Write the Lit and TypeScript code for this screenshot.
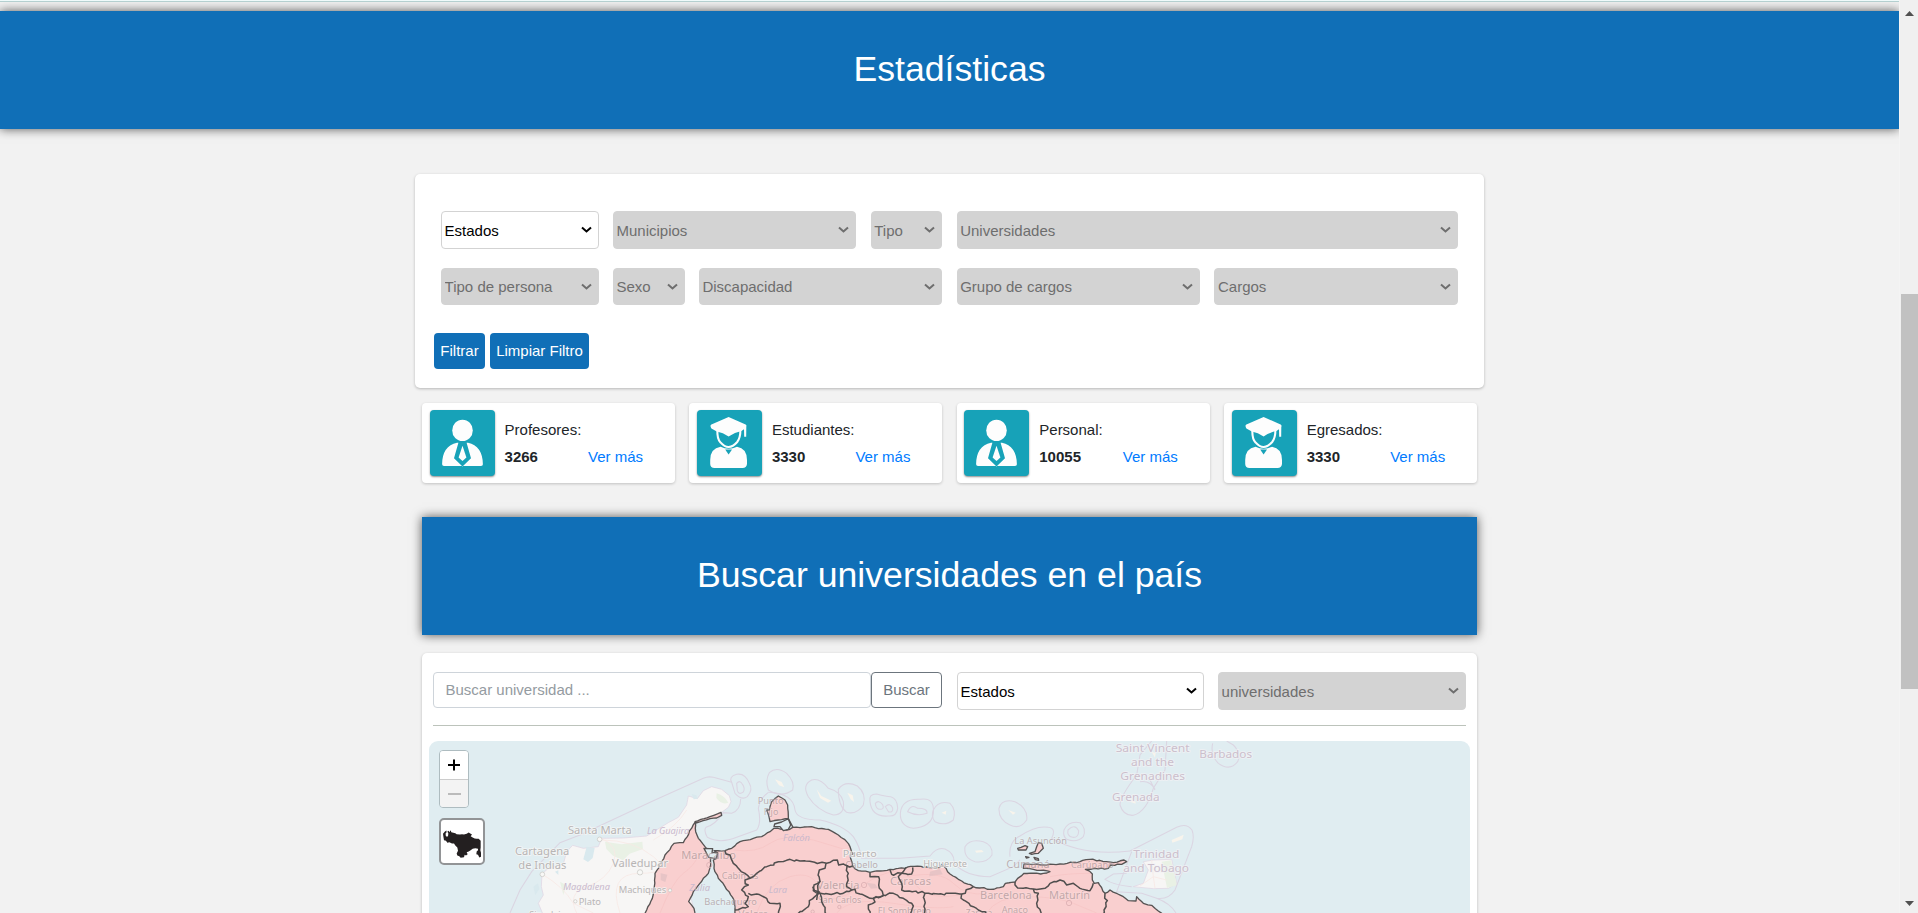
import { LitElement, html, svg, css } from "lit";
import { customElement, property } from "lit/decorators.js";

type Pt = [number, number];

/** Reads "x,y x,y ..." and shifts it by dx. */
const pts = (s: string, dx = 0): Pt[] =>
  s.trim().split(/\s+/).map((p) => {
    const [x, y] = p.split(",").map(Number);
    return [x + dx, y] as Pt;
  });

/** Roughens a polyline so that it looks like a surveyed border. */
const jag = (list: Pt[], amount = 3.2): string => {
  let seed = 7;
  const rnd = () => {
    seed = (seed * 16807) % 2147483647;
    return seed / 2147483647 - 0.5;
  };
  const out: string[] = [];
  list.forEach(([x, y], i) => {
    out.push(`${x},${y}`);
    const next = list[i + 1];
    if (!next) return;
    const len = Math.hypot(next[0] - x, next[1] - y);
    const n = Math.floor(len / 9);
    for (let k = 1; k < n; k++) {
      const t = k / n;
      const px = x + (next[0] - x) * t + rnd() * amount * 2;
      const py = y + (next[1] - y) * t + rnd() * amount * 2;
      out.push(`${px.toFixed(1)},${py.toFixed(1)}`);
    }
  });
  return out.join(" ");
};

/* Map drawing units: three per pixel. */
const WEST = `672,560 680,540 697,505 703,470 705,430 725,395 735,375 762,340 790,338 825,277
 827,305 835,325 855,350 868,365 872,380 872,405 865,430 850,445 832,470 820,485 806,515 822,535 828,560`;
const MAINLAND = `948,560 942,510 915,470 895,445 882,415 880,390 890,385 893,370 882,362 915,362 935,355 960,335 1000,325
 1025,320 1050,305 1062,295 1080,297 1100,300 1118,292 1140,293 1175,290 1195,296 1225,298 1255,315 1280,335
 1290,350 1295,368 1303,371 1290,375 1298,408 1315,422 1350,427 1410,418 1455,415 1472,409 1560,412 1565,403
 1578,415 1590,432 1625,453 1660,470 1710,478 1750,470 1756,460 1785,456 1793,445 1812,430 1870,430 1890,425
 1840,418 1810,415 1812,402 1870,405 1920,402 1980,395 2010,388 2080,398 2112,390 2120,395 2105,403 2072,405
 2065,415 1996,418 2017,432 2017,450 2023,460 2035,458 2055,490 2070,480 2110,500 2125,512 2148,513 2150,500
 2170,520 2195,526 2215,543 2240,560`;

const BORDERS: string[] = [
  "915,362 930,375 940,400 955,415 975,430 990,445 1010,430 1040,410 1075,395 1110,388 1140,393 1200,398 1220,400 1252,390 1256,405 1298,408",
  "990,445 975,450 985,465 965,480 985,500 975,520 985,530 945,540",
  "985,490 1010,492 1040,505 1050,520 1080,520 1075,555",
  "1218,400 1215,415 1198,420 1200,455 1182,465 1180,482 1200,490 1205,515 1220,555",
  "1282,405 1285,430 1280,470 1295,480 1260,492 1200,490",
  "1295,480 1305,478 1320,492 1350,505 1390,497 1378,475 1376,440 1350,440 1350,428",
  "1390,495 1420,490 1450,505 1480,528 1470,555",
  "1458,412 1450,425 1435,440 1445,460 1445,480 1515,490 1625,492 1660,470",
  "1410,420 1415,433 1445,430 1475,432 1478,412",
  "1515,490 1512,555",
  "1625,492 1630,510 1660,530 1675,540 1710,555",
  "1785,456 1785,465 1810,475 1840,477 1875,475 1890,460 1920,450 1940,465 1960,460 1980,475 2010,482 2020,460",
  "1840,477 1855,490 1850,520 1865,555",
  "2055,490 2062,512 2048,555",
  "1200,452 1190,495 1168,512 1165,530 1130,555",
  "1178,470 1198,486 1190,510",
  "1390,497 1360,505 1365,516 1345,525 1350,555",
];

const ISLANDS: string[] = [
  "1048,240 1055,215 1075,198 1095,210 1103,225 1105,265 1075,270 1050,275 1047,260 1040,240 1048,240",
  "1793,355 1815,347 1823,350 1818,360 1795,360 1793,355",
  "1828,370 1845,365 1850,350 1855,338 1865,340 1870,355 1855,370 1835,373 1828,370",
  "1817,380 1827,382 1819,384 1817,380",
  "1842,382 1855,386 1856,391 1846,389 1842,382",
  "825,275 870,260 903,247 905,256 890,264 870,266 828,279",
];

const SEA_LINES: string[] = [
  "M270 549 L300 480 335 425 420 338 480 315 700 212 850 145 Q865 138 880 142 L935 157",
  "M935 157 Q925 140 950 133 Q975 128 988 160 Q1000 180 982 200 Q965 212 945 190Z",
  "M950 160 q10 -12 18 4 q8 12 2 22 q-14 10 -18 -4z",
  "M962 207 Q962 240 935 250 L910 248 Q885 285 858 292 Q850 300 862 322 Q900 342 950 322 L1010 300 Q1025 280 1015 235 Q1020 205 1045 187",
  "M1045 180 Q1035 150 1048 128 Q1070 108 1100 130 Q1125 155 1118 180 Q1085 205 1045 180Z",
  "M1045 187 Q1120 190 1125 240 Q1130 270 1200 270 Q1270 285 1300 320 Q1320 350 1325 385 L1440 385 1530 378 Q1550 350 1575 357 Q1605 370 1602 400 Q1640 440 1710 440 L1780 410 1800 390",
  "M1165 200 Q1145 165 1175 150 Q1200 143 1225 175 Q1262 185 1270 215 Q1275 255 1240 255 Q1190 240 1165 200Z",
  "M1255 178 Q1275 150 1312 168 Q1340 190 1330 225 Q1310 255 1280 247 Q1255 230 1255 178Z",
  "M1350 215 Q1345 192 1370 192 Q1400 200 1412 200 Q1432 205 1433 235 Q1430 260 1405 258 Q1355 262 1350 215Z",
  "M1366 220 q10 -12 22 4 q6 14 -8 14 q-12 0 -14 -18z M1396 230 q14 -14 22 4 q2 14 -12 12z",
  "M1441 250 Q1445 205 1500 208 Q1545 200 1540 250 Q1535 290 1480 295 Q1440 290 1441 250Z M1463 245 q10 -25 30 -10 q30 0 28 15 q-30 10 -58 -5z",
  "M1540 240 Q1555 210 1590 220 Q1610 240 1600 270 Q1575 290 1545 275 Q1532 260 1540 240Z",
  "M1737 235 Q1745 205 1785 215 Q1825 235 1820 270 Q1800 300 1770 285 Q1735 270 1737 235Z",
  "M1635 350 Q1650 325 1690 335 Q1720 345 1716 375 Q1700 400 1665 395 Q1630 385 1635 350Z",
  "M1770 380 Q1765 335 1800 318 Q1850 285 1885 292 Q1910 295 1895 325 Q1990 380 2130 363",
  "M1932 300 Q1945 272 1980 278 Q2000 295 1990 320 Q1970 340 1940 328 Q1928 318 1932 300Z",
  "M1944 300 q20 -20 32 2 q0 22 -18 20 q-18 -4 -14 -22z",
  "M2130 363 L2270 292 Q2300 278 2316 300 Q2324 320 2315 350 L2265 480 Q2245 510 2210 505 L2165 490 2090 485 2135 365",
  "M2135 470 Q2080 465 2055 448 L2080 432 2120 430 M2210 505 Q2250 520 2268 549",
  "M2195 33 L2160 75 2150 135 Q2100 200 2100 225 Q2110 258 2140 256 Q2180 245 2200 175 L2235 120 2240 33",
  "M2190 150 L2205 180 M2160 155 Q2190 150 2205 178",
  "M2378 40 Q2370 75 2395 100 Q2430 125 2453 95 Q2465 70 2440 45 L2420 33",
];

interface Label { t: string; x: number; y: number; w: number; s: number; k?: string; }
const LABELS: Label[] = [
  { t: "Santa Marta", x: 444, y: 312, w: 191, s: 31 },
  { t: "Cartagena", x: 285, y: 374, w: 163, s: 31 },
  { t: "de Indias", x: 295, y: 417, w: 144, s: 31 },
  { t: "Valledupar", x: 576, y: 412, w: 168, s: 31 },
  { t: "Machiques", x: 596, y: 490, w: 143, s: 27 },
  { t: "Plato", x: 476, y: 524, w: 67, s: 27 },
  { t: "Sincelejo", x: 328, y: 565, w: 110, s: 27 },
  { t: "La Guajira", x: 681, y: 313, w: 127, s: 26, k: "region" },
  { t: "Magdalena", x: 430, y: 479, w: 140, s: 26, k: "region" },
  { t: "Zulia", x: 808, y: 482, w: 62, s: 26, k: "region" },
  { t: "Falcón", x: 1089, y: 332, w: 81, s: 26, k: "region" },
  { t: "Lara", x: 1046, y: 488, w: 55, s: 26, k: "region" },
  { t: "Maracaibo", x: 784, y: 388, w: 164, s: 31, k: "over" },
  { t: "Cabimas", x: 905, y: 446, w: 110, s: 27, k: "over" },
  { t: "Bachaquero", x: 853, y: 524, w: 158, s: 27, k: "over" },
  { t: "Valera", x: 955, y: 562, w: 90, s: 27, k: "over" },
  { t: "Punto", x: 1013, y: 221, w: 78, s: 27, k: "over" },
  { t: "Fijo", x: 1031, y: 255, w: 44, s: 27, k: "over" },
  { t: "Puerto", x: 1268, y: 381, w: 102, s: 27 },
  { t: "Cabello", x: 1276, y: 415, w: 98, s: 27, k: "over" },
  { t: "Valencia", x: 1190, y: 476, w: 128, s: 32, k: "over" },
  { t: "San Carlos", x: 1194, y: 519, w: 130, s: 27, k: "over" },
  { t: "Caracas", x: 1410, y: 465, w: 123, s: 32, k: "over" },
  { t: "Higuerote", x: 1510, y: 412, w: 131, s: 27 },
  { t: "El Sombrero", x: 1373, y: 553, w: 160, s: 27, k: "over" },
  { t: "Zaraza", x: 1637, y: 557, w: 80, s: 27, k: "over" },
  { t: "Barcelona", x: 1680, y: 507, w: 155, s: 32, k: "over" },
  { t: "Anaco", x: 1745, y: 550, w: 79, s: 27, k: "over" },
  { t: "Maturín", x: 1887, y: 507, w: 123, s: 32, k: "over" },
  { t: "La Asunción", x: 1783, y: 341, w: 158, s: 27, k: "over" },
  { t: "Cumaná", x: 1759, y: 413, w: 130, s: 31, k: "over" },
  { t: "Carúpano", x: 1953, y: 413, w: 128, s: 27, k: "over" },
  { t: "Saint Vincent", x: 2087, y: 67, w: 222, s: 32, k: "country" },
  { t: "and the", x: 2133, y: 109, w: 129, s: 32, k: "country" },
  { t: "Grenadines", x: 2101, y: 151, w: 194, s: 32, k: "country" },
  { t: "Grenada", x: 2076, y: 214, w: 143, s: 32, k: "country" },
  { t: "Barbados", x: 2338, y: 83, w: 158, s: 32, k: "country" },
  { t: "Trinidad", x: 2140, y: 384, w: 138, s: 32, k: "country" },
  { t: "and Tobago", x: 2110, y: 426, w: 197, s: 32, k: "country" },
];

const VENEZUELA = `M22 62 L21 55 26 49 31 45 32 50 29 53 29 60 32 64 36 62 37 54 34 48 38 46 40 50 44 44 46 50 52 52 58 53 62 56
 72 57 78 56 84 57 92 55 98 51 104 55 108 57 104 62 110 66 116 69 122 70 128 70 134 76 134 96 133 104 135 112 135 124
 130 126 126 118 121 116 122 108 126 104 126 100 118 98 110 100 104 104 98 108 92 110 95 116 90 120 86 118 84 125
 74 127 70 122 64 120 62 114 66 106 64 96 58 90 54 84 48 84 40 80 34 82 30 76 24 74Z`;

@customElement("filter-select")
class FilterSelect extends LitElement {
  @property() label = "";
  @property({ type: Boolean, reflect: true }) disabled = false;

  static styles = css`
    :host { display: grid; min-width: 0; }
    .field, .chevron { grid-area: 1 / 1; }
    .field {
      appearance: none; box-sizing: border-box; width: 100%; height: 100%; margin: 0;
      padding: 0 20px 0 2.6px; border: 1px solid #d3d3d3; border-radius: 4px; background: #fff;
      color: #000; font: 15px "Liberation Sans", Arial, sans-serif; opacity: 1;
    }
    .field:disabled { background: #d3d3d3; color: #6e6e6e; }
    .chevron { align-self: center; justify-self: end; margin-right: 7px; pointer-events: none; stroke: #000; }
    :host([disabled]) .chevron { stroke: #6e6e6e; }
  `;

  render() {
    return html`
      <select class="field" ?disabled=${this.disabled}><option>${this.label}</option></select>
      <svg class="chevron" width="11" height="8" viewBox="0 0 11 8" fill="none" stroke-width="2">
        <path d="M1 1.5 L5.5 5.5 10 1.5" />
      </svg>`;
  }
}

@customElement("stat-card")
class StatCard extends LitElement {
  @property() label = "";
  @property() value = "";
  @property() icon = "person";

  static styles = css`
    :host {
      display: flex; box-sizing: border-box; height: 80px; padding: 7px 7.6px; background: #fff; border-radius: 4px;
      box-shadow: 0 1px 3px rgba(0, 0, 0, .2); color: #212529; font: 15px "Liberation Sans", Arial, sans-serif;
    }
    .icon { width: 65px; height: 66px; border-radius: 4px; background: #17a2b8; box-shadow: 0 1px 2px rgba(0, 0, 0, .45); }
    .text { display: grid; grid-template-columns: 83.5px auto; align-content: start; padding: 8.5px 0 0 10px; line-height: 22px; row-gap: 5px; }
    .label { grid-column: 1 / 3; }
    .value { font-weight: bold; }
    .more { color: #007bff; text-decoration: none; }
  `;

  private person() {
    return svg`
      <ellipse cx="32.5" cy="20.4" rx="10.3" ry="10.7" fill="#fdfdfd"/>
      <path fill="#fdfdfd" d="M27 32.8 Q12.3 36 12.1 54.2 Q12.2 56 14 56 L51 56 Q52.9 56 52.9 54.2 Q52.5 36 38 32.8 L36.6 32.8 41 48.3 32.5 56.4 24 48.3 28.4 32.8Z"/>
      <path fill="#fdfdfd" d="M32.5 35.8 L36.4 47.5 32.5 51 28.6 47.5Z"/>`;
  }

  private graduate() {
    return svg`
      <path fill="#fdfdfd" d="M31.6 7 L48.6 14.6 Q50 15.3 49.3 17 L49.2 26.8 47.2 26.8 47 19.2 44.4 21 Q37 22.6 31.6 26.4 Q26 22.6 19.8 21.4 L14.4 18.4 Q12.6 15.6 14.4 14.6Z"/>
      <path fill="none" stroke="#fdfdfd" stroke-width="2.1" d="M20.4 20 Q20 29 23.5 32.4 Q31.6 41.8 40.2 32 Q43.4 28 43.4 20"/>
      <path fill="#fdfdfd" d="M23.6 36.8 Q31.6 40.6 40 36.8 Q50 38.5 50 50 L50 54 Q49.5 58 45.5 58 L17.5 58 Q13.4 58 13.2 54 L13.2 50 Q13.2 38.5 23.6 36.8Z"/>
      <path fill="#17a2b8" d="M28.2 39.6 L35 39.6 31.6 44.4Z"/>`;
  }

  render() {
    return html`
      <svg class="icon" viewBox="0 0 65 66">${this.icon === "person" ? this.person() : this.graduate()}</svg>
      <div class="text">
        <span class="label">${this.label}:</span>
        <span class="value">${this.value}</span>
        <a class="more">Ver más</a>
      </div>`;
  }
}

@customElement("country-map")
class CountryMap extends LitElement {
  static styles = css`
    :host { display: grid; height: 400px; border-radius: 9px; overflow: hidden; background: #e0edf1; }
    .chart, .controls { grid-area: 1 / 1; }
    .chart { width: 1041px; height: 172px; display: block; }
    .controls { display: flex; flex-direction: column; align-items: flex-start; gap: 10px; padding: 9px 0 0 10px; z-index: 1; }
    .zoom { box-sizing: border-box; width: 30px; height: 58px; border: 1px solid #aebcc0; border-radius: 4px; overflow: hidden; }
    .step { box-sizing: border-box; height: 28px; display: grid; place-items: center; background: #fff; }
    .step.off { background: #f3f3f3; border-top: 1px solid #ccc; }
    .home { box-sizing: border-box; width: 46px; height: 47px; border: 2px solid #929496; border-radius: 5px; background: #fff; display: grid; place-items: center; }
    .land { fill: #f7f6f5; stroke: #dfd3e2; stroke-width: 2; }
    .isle { fill: #f8f4ec; }
    .green { fill: #e9f1e5; }
    .sea { fill: none; stroke: #dbd5e2; stroke-width: 3.2; }
    .road { fill: none; stroke: #f7e9e5; stroke-width: 2.4; }
    .roadpink { fill: none; stroke: #f6c5c5; stroke-width: 2.4; }
    .state { fill: #f9cfcf; stroke: #565353; stroke-width: 4; stroke-linejoin: round; }
    .strait { fill: #e0edf1; }
    .border { fill: none; stroke: #504e4e; stroke-width: 4.5; stroke-linejoin: round; }
    .name { font-family: "Noto Sans", sans-serif; fill: #b7b5b5; paint-order: stroke; stroke: #f8f7f6; stroke-width: 5; stroke-opacity: .8; }
    .name.region { font-style: italic; fill: #c9b9cd; stroke: none; }
    .name.over { fill: #a58f92; fill-opacity: .68; stroke: #fff; stroke-opacity: .18; }
    .name.country { fill: #cbbfcc; stroke: #f3f2f5; }
    .dot { fill: #f8f8f6; stroke: #c4c4c0; stroke-width: 2; }
  `;

  render() {
    return html`
      <svg class="chart" viewBox="27 33 3123 516">
        <path class="land" d="M372 560 L355 520 370 495 364 470 366 432 385 415 430 402 440 365 458 346 490 355 535 350 545 325 610 324 680 318 745 278 775 262 800 225 805 198 832 206 850 182 875 170 905 178 928 197 933 215 925 232 905 247 825 277 790 420 828 560Z"/>
        <path class="land" d="M2140 470 L2170 460 2185 420 2170 395 2200 390 2255 388 2262 420 2270 460 2245 475 2200 476Z"/>
        <path class="green" d="M890 190 q25 8 35 28 q-20 8 -36 -14z M555 335 l50 8 62 -8 2 22 -40 14 -20 20 -30 -14 -20 -20z M2225 395 l28 -4 10 40 8 35 -30 8z M420 455 l18 10 -8 30z"/>
        <path class="isle" d="M1065 148 l20 8 8 16 -16 -6z M1190 178 l14 20 30 14 -10 6 -24 -14z M1282 188 l16 8 4 20 -10 -8z M1765 240 l22 8 -8 6z M1565 248 l14 -6 -2 12z M1665 362 l20 -2 6 6 -22 2z M2255 330 l36 -16 -4 14 -30 10z M2195 65 l12 4 -2 14z M2130 215 l15 -8 2 14z"/>
        <path fill="#d9e9ee" d="M815 192 l14 4 4 10 -12 2z M500 350 l24 4 -6 30 -14 12 -14 -8z M340 470 l14 -10 4 16 -12 20z M405 425 l10 -4 0 14z"/>
        ${["M545 325 Q600 350 580 400 T500 470 T470 549", "M366 432 Q430 470 460 520 L520 549", "M545 330 Q640 330 700 380 T660 430 T600 549", "M800 240 Q770 290 700 330", "M2195 390 L2200 440 2160 468 M2200 440 L2240 450 M2200 440 L2205 475"].map(
          (d) => svg`<path class="road" d=${d}/>`
        )}
        ${SEA_LINES.map((d) => svg`<path class="sea" d=${d}/>`)}
        <polygon class="state" points=${jag(pts(WEST), 1.6)}/>
        <polygon class="state" points=${jag(pts(MAINLAND), 2)}/>
        ${ISLANDS.map((p) => svg`<polygon class="state" points=${jag(pts(p), 1)}/>`)}
        <path class="state strait" d="M1062 290 L1064 282 1085 276 1105 266 1112 285 1105 298 1090 302 1080 290Z"/>
        <path class="state strait" d="M1105 266 L1119 292 M868 356 L878 356 876 368 893 368 888 386 866 382 852 355Z"/>
        ${["M720 549 Q760 450 790 430 T840 370", "M940 360 Q1010 370 1050 340 T1180 330 L1280 360", "M1010 549 Q1040 460 1110 440 T1200 480 T1330 465 T1480 455 T1640 490", "M1250 549 Q1290 500 1420 520 T1600 530", "M1700 549 Q1730 500 1820 500 T1960 520 L2030 549", "M1890 440 Q1940 430 2010 430", "M1460 440 Q1560 420 1600 460 T1700 490"].map(
          (d) => svg`<path class="roadpink" d=${d}/>`
        )}
        <path fill="#d5b9bd" opacity=".5" d="M1340 458 l25 4 8 12 -20 2z M722 430 l20 4 -6 22 -14 -6z M1530 425 l30 -8 8 16 -40 6z"/>
        ${LABELS.map(
          (l) => svg`<text class="name ${l.k ?? ""}" x=${l.x} y=${l.y} font-size=${l.s} textLength=${l.w} lengthAdjust="spacingAndGlyphs">${l.t}</text>`
        )}
        ${BORDERS.map((p) => svg`<polyline class="border" points=${jag(pts(p), 4.4)}/>`)}
        ${[[539, 328, 7], [367, 433, 7], [660, 427, 8], [466, 514, 5], [750, 481, 5]].map(
          ([x, y, r]) => svg`<circle class="dot" cx=${x} cy=${y} r=${r}/>`
        )}
        ${[[1332, 465, 8], [1258, 531, 5], [1947, 519, 8], [1178, 545, 5], [868, 405, 8]].map(
          ([x, y, r]) => svg`<circle cx=${x} cy=${y} r=${r} fill="none" stroke="#dcb0b3" stroke-width="2.5"/>`
        )}
      </svg>
      <div class="controls">
        <div class="zoom">
          <div class="step"><svg width="12" height="12" viewBox="0 0 12 12" stroke="#000" stroke-width="2"><path d="M6 .5V11.5M0 6H12"/></svg></div>
          <div class="step off"><svg width="13" height="12" viewBox="0 0 13 12" stroke="#bbb" stroke-width="2"><path d="M0 6H13"/></svg></div>
        </div>
        <div class="home"><svg width="42" height="32" viewBox="15 31.5 126 96"><path fill="#231f20" d=${VENEZUELA}/></svg></div>
      </div>`;
  }
}

@customElement("app-root")
class AppRoot extends LitElement {
  static styles = css`
    :host { display: flex; height: 100vh; overflow: hidden; background: #f2f2f2; font: 15px "Liberation Sans", Arial, sans-serif; }
    .page { flex: 1; min-width: 0; overflow: hidden; display: flex; flex-direction: column; align-items: center; }
    .edge { align-self: stretch; flex: none; height: 1px; background: #effafa; border-bottom: 1px solid #b4cfcf; z-index: 1; }
    .banner { flex: none; box-sizing: border-box; height: 118px; display: flex; align-items: center; justify-content: center; margin: 0;
      background: #106fb7; color: #fff; font-size: 35.65px; font-weight: 400; line-height: 43px; padding-bottom: 2px; box-shadow: 0 0 10px rgba(0, 0, 0, .65); }
    .banner.top { align-self: stretch; margin-top: 9px; }
    .banner.search { width: 1055px; margin-top: 34px; }
    .filters { flex: none; box-sizing: border-box; width: 1069px; height: 214px; margin-top: 45px; padding: 37px 19px 0; background: #fff; border-radius: 5px; box-shadow: 0 1px 3px rgba(0, 0, 0, .25); }
    .grid { display: grid; grid-template-columns: repeat(12, minmax(0, 1fr)); column-gap: 14.2px; row-gap: 19px; grid-template-rows: 38px 37px; padding: 0 7px; }
    .c1 { grid-column: span 1; }
    .c2 { grid-column: span 2; }
    .c3 { grid-column: span 3; }
    .c6 { grid-column: span 6; }
    .actions { display: flex; gap: 5px; margin-top: 28px; }
    .primary { box-sizing: border-box; height: 36px; padding: 0 0 1px; border: 0; border-radius: 4px; background: #106fb7; color: #fff; font: inherit; }
    .apply { width: 51px; }
    .clear { width: 99px; }
    .stats { flex: none; width: 1055px; display: grid; grid-template-columns: repeat(4, minmax(0, 1fr)); gap: 14.4px; margin-top: 15px; }
    .finder { flex: none; box-sizing: border-box; width: 1055px; height: 600px; margin-top: 18px; padding: 19px 7px 0; background: #fff; border-radius: 5px; box-shadow: 0 1px 3px rgba(0, 0, 0, .25); }
    .bar { display: grid; grid-template-columns: 438px 71px 247px 248px; column-gap: 0; align-items: start; padding: 0 4px; height: 53px; }
    .query { box-sizing: border-box; height: 36px; width: 100%; border: 1px solid #ced4da; border-radius: 4px; padding: 0 11.5px 1px; font: inherit; outline: 0; }
    .query::placeholder { color: #949ba1; opacity: 1; }
    .go { box-sizing: border-box; height: 36px; padding: 0 0 1px; border: 1px solid #6c757d; border-radius: 4px; background: #fff; color: #6c757d; font: inherit; }
    .pick { height: 38px; margin-left: 15px; margin-right: -15px; }
    .pick.last { margin-left: 29px; width: 248px; }
    .rule { margin: 0 4px 15px; height: 1px; background: #bcc3bb; }
    .scroll { flex: none; box-sizing: border-box; width: 19px; background: #f0f0f0; display: flex; flex-direction: column; align-items: flex-end; padding-top: 11px; border-left: 1px solid #f4f4f4; }
    .arrow { width: 9px; height: 5px; margin-right: 4px; fill: #505050; }
    .thumb { width: 17px; height: 395px; margin: 278px 0 212px; background: #c1c1c1; }
  `;

  render() {
    return html`
      <main class="page">
        <div class="edge"></div>
        <h1 class="banner top">Estadísticas</h1>
        <section class="filters">
          <div class="grid">
            <filter-select class="c2" label="Estados"></filter-select>
            <filter-select class="c3" label="Municipios" disabled></filter-select>
            <filter-select class="c1" label="Tipo" disabled></filter-select>
            <filter-select class="c6" label="Universidades" disabled></filter-select>
            <filter-select class="c2" label="Tipo de persona" disabled></filter-select>
            <filter-select class="c1" label="Sexo" disabled></filter-select>
            <filter-select class="c3" label="Discapacidad" disabled></filter-select>
            <filter-select class="c3" label="Grupo de cargos" disabled></filter-select>
            <filter-select class="c3" label="Cargos" disabled></filter-select>
          </div>
          <div class="actions">
            <button class="primary apply">Filtrar</button>
            <button class="primary clear">Limpiar Filtro</button>
          </div>
        </section>
        <section class="stats">
          <stat-card label="Profesores" value="3266" icon="person"></stat-card>
          <stat-card label="Estudiantes" value="3330" icon="graduate"></stat-card>
          <stat-card label="Personal" value="10055" icon="person"></stat-card>
          <stat-card label="Egresados" value="3330" icon="graduate"></stat-card>
        </section>
        <h1 class="banner search">Buscar universidades en el país</h1>
        <section class="finder">
          <div class="bar">
            <input class="query" placeholder="Buscar universidad ..." />
            <button class="go">Buscar</button>
            <filter-select class="pick" label="Estados"></filter-select>
            <filter-select class="pick last" label="universidades" disabled></filter-select>
          </div>
          <div class="rule"></div>
          <country-map></country-map>
        </section>
      </main>
      <div class="scroll">
        <svg class="arrow" viewBox="0 0 9 5"><path d="M4.5 0L9 5H0Z"/></svg>
        <div class="thumb"></div>
        <svg class="arrow" viewBox="0 0 9 5"><path d="M0 0H9L4.5 5Z"/></svg>
      </div>`;
  }
}
